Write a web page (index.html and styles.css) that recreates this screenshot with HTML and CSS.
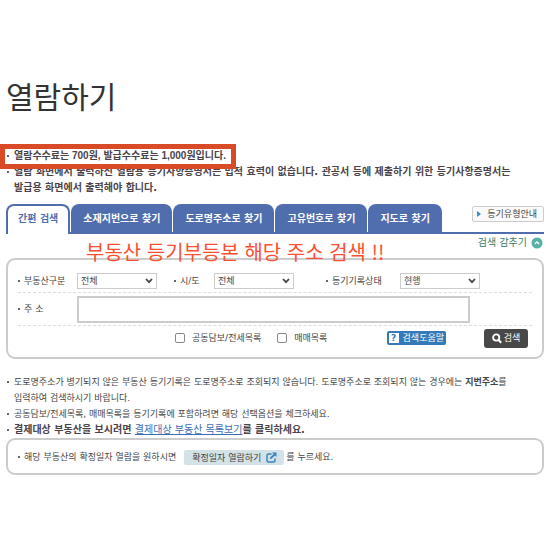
FILE: index.html
```html
<!DOCTYPE html>
<html lang="ko">
  <head>
    <meta charset="UTF-8" />
    <meta name="viewport" content="width=device-width, initial-scale=1.0" />
    <title>열람하기</title>
    <link rel="stylesheet" href="styles.css">
  </head>
  <body>
    <div class="container">
      <h1>열람하기</h1>
      <ul class="list notice">
        <li class="fee">열람수수료는 700원, 발급수수료는 1,000원입니다.</li>
        <li>열람 화면에서 출력하신 열람용 등기사항증명서는 법적 효력이 없습니다. 관공서 등에 제출하기 위한 등기사항증명서는<br>발급용 화면에서 출력해야 합니다.</li>
      </ul>

      <div class="tab-header">
        <a class="tab-item active" href="#">간편 검색</a>
        <a class="tab-item" href="#">소재지번으로 찾기</a>
        <a class="tab-item" href="#">도로명주소로 찾기</a>
        <a class="tab-item" href="#">고유번호로 찾기</a>
        <a class="tab-item" href="#">지도로 찾기</a>
        <button class="guide" type="button">
          <svg width="4" height="6" viewBox="0 0 4 6"><path d="M0 0L4 3L0 6Z" fill="#2f8fc4"/></svg>
          등기유형안내
        </button>
      </div>

      <div class="toolbar">
        <p class="callout">부동산 등기부등본 해당 주소 검색 !!</p>
        <button class="toggle" type="button">
          검색 감추기
          <svg width="12" height="12" viewBox="0 0 12 12"><circle cx="6" cy="6" r="5.5" fill="#55b3a3"/><path d="M3.8 7L6 4.8L8.2 7" fill="none" stroke="#fff" stroke-width="1.3"/></svg>
        </button>
      </div>

      <form class="panel search">
        <div class="row">
          <label class="name" for="kind">부동산구분</label>
          <div class="select">
            <select id="kind"><option>전체</option></select>
            <svg width="8" height="6" viewBox="0 0 8 6"><path d="M1 1L4 4.2L7 1" fill="none" stroke="#444" stroke-width="1.8"/></svg>
          </div>
          <label class="name" for="city">시/도</label>
          <div class="select">
            <select id="city"><option>전체</option></select>
            <svg width="8" height="6" viewBox="0 0 8 6"><path d="M1 1L4 4.2L7 1" fill="none" stroke="#444" stroke-width="1.8"/></svg>
          </div>
          <label class="name" for="state">등기기록상태</label>
          <div class="select">
            <select id="state"><option>현행</option></select>
            <svg width="8" height="6" viewBox="0 0 8 6"><path d="M1 1L4 4.2L7 1" fill="none" stroke="#444" stroke-width="1.8"/></svg>
          </div>
        </div>
        <div class="row address">
          <label class="name" for="address">주 소</label>
          <input id="address" type="text">
        </div>
        <div class="row options">
          <div class="checks">
            <label><input type="checkbox"> 공동담보/전세목록</label>
            <label><input type="checkbox"> 매매목록</label>
          </div>
          <button class="help" type="button"><span class="mark">?</span>검색도움말</button>
          <button class="submit" type="submit">
            <svg width="10" height="11" viewBox="0 0 10 11"><circle cx="4.2" cy="4.5" r="3.1" fill="none" stroke="#fff" stroke-width="1.8"/><path d="M6.3 6.8L9.2 9.8" stroke="#fff" stroke-width="2"/></svg>
            검색
          </button>
        </div>
      </form>

      <ul class="list help-list">
        <li>도로명주소가 병기되지 않은 부동산 등기기록은 도로명주소로 조회되지 않습니다. 도로명주소로 조회되지 않는 경우에는 <b>지번주소</b>를<br>입력하여 검색하시기 바랍니다.</li>
        <li>공동담보/전세목록, 매매목록을 등기기록에 포함하려면 해당 선택옵션을 체크하세요.</li>
        <li class="pay"><strong>결제대상 부동산을 보시려면 </strong><a href="#">결제대상 부동산 목록보기</a><strong>를 클릭하세요.</strong></li>
      </ul>

      <div class="panel date">
        <span class="name">해당 부동산의 확정일자 열람을 원하시면</span>
        <button class="open" type="button">
          확정일자 열람하기
          <svg width="11" height="11" viewBox="0 0 11 11"><path d="M5.5 2H2.5Q1 2 1 3.5V8.5Q1 10 2.5 10H7.5Q9 10 9 8.5V6.5" fill="none" stroke="#3b83bd" stroke-width="1.5"/><path d="M4.3 6.7L8.5 2.5" stroke="#3b83bd" stroke-width="1.8"/><path d="M6 0.5H10.5V5Z" fill="#3b83bd"/></svg>
        </button>
        <span>를 누르세요.</span>
      </div>
    </div>
  </body>
</html>
```

FILE: styles.css
```css
* {
  box-sizing: border-box;
}

body {
  margin: 0;
  background: #fff;
  color: #444;
  font-family: "DejaVu Sans", "Noto Sans CJK KR", sans-serif;
  font-size: 9px;
  line-height: 16px;
}

.container {
  padding: 76px 6px 0;
}

h1 {
  margin: 0 0 28px;
  color: #333;
  font-size: 30px;
  font-weight: 400;
  line-height: 44px;
}

button,
input,
select {
  margin: 0;
  font: inherit;
}

button {
  display: flex;
  align-items: center;
  padding: 0;
  border: 0;
  background: none;
  white-space: nowrap;
}

svg {
  flex: none;
}

.list {
  margin: 0;
  padding: 0;
  list-style: none;
}

.list li {
  position: relative;
  padding-left: 8px;
  white-space: nowrap;
}

.list li::before {
  content: "";
  position: absolute;
  top: 7px;
  left: 1px;
  width: 2px;
  height: 2px;
  background: #666;
}

.notice {
  color: #4a4248;
  font-size: 10px;
  font-weight: 700;
}

.notice .fee {
  width: fit-content;
  font-family: "Liberation Sans", "Noto Sans CJK KR", sans-serif;
}

/* 수수료 강조 테두리 */
.notice .fee::after {
  content: "";
  position: absolute;
  z-index: 1;
  inset: -4px -10px -5px -6px;
  border: 5px solid #d94a27;
}

.tab-header {
  display: flex;
  gap: 1px;
  height: 30px;
  margin-top: 8px;
  border-bottom: 2px solid #506dae;
}

.tab-item {
  height: 30px;
  padding: 0 12px;
  border-radius: 8px 8px 0 0;
  background: #506dae;
  color: #fff;
  font-size: 10px;
  font-weight: 700;
  line-height: 29px;
  text-decoration: none;
  white-space: nowrap;
}

.tab-item.active {
  padding: 0 10px;
  border: 2px solid #506dae;
  border-bottom: 0;
  background: #fff;
  color: #506dae;
  line-height: 26px;
}

.guide {
  gap: 6px;
  height: 16px;
  margin: 2px 0 0 auto;
  padding: 0 6px 0 4px;
  border: 1px solid #ccc;
  border-radius: 2px;
  background: #fafafa;
  color: #444;
}

.toolbar {
  position: relative;
  display: flex;
  justify-content: flex-end;
  padding-bottom: 6px;
}

.callout {
  position: absolute;
  z-index: 1;
  top: 4px;
  left: 80px;
  margin: 0;
  color: #fb4f2f;
  font-family: "Noto Sans CJK KR", sans-serif;
  font-size: 20px;
  line-height: 28px;
  white-space: nowrap;
}

.toggle {
  gap: 4px;
  height: 18px;
  padding-right: 1px;
  color: #348069;
  font-size: 10px;
}

.panel {
  border: 2px solid #ccc;
  border-radius: 9px;
}

.search {
  padding: 10px;
}

.row {
  display: grid;
  grid-template-columns: 59fr 97fr 40fr 112fr 74fr 132fr;
  align-items: center;
  height: 23px;
  border-bottom: 1px dashed #ddd;
}

.name {
  display: flex;
  align-items: center;
  gap: 4px;
  white-space: nowrap;
}

.name::before {
  content: "";
  width: 2px;
  height: 2px;
  background: #666;
}

.select {
  position: relative;
  width: 80px;
}

.select select {
  display: block;
  width: 100%;
  height: 16px;
  padding: 0 3px;
  border: 1px solid #ccc;
  border-radius: 0;
  background: #fff;
  color: #444;
  line-height: 14px;
  appearance: none;
}

.select svg {
  position: absolute;
  top: 5px;
  right: 4px;
  pointer-events: none;
}

.row.address {
  grid-template-columns: 59fr 393fr 62fr;
  height: 33px;
}

.address input {
  width: 100%;
  height: 27px;
  padding: 0 4px;
  border: 2px solid #ccc;
}

.row.options {
  display: flex;
  height: 24px;
  margin-bottom: -3px;
  padding: 0 4px 0 157px;
  border-bottom: 0;
}

.checks {
  display: flex;
  gap: 16px;
  white-space: nowrap;
}

.checks label {
  display: flex;
  align-items: center;
  gap: 7px;
}

.checks input {
  width: 10px;
  height: 10px;
  border: 1px solid #888;
  border-radius: 2px;
  background: #fff;
  appearance: none;
}

.help {
  gap: 4px;
  height: 14px;
  margin-left: auto;
  padding: 0 2px;
  border-radius: 2px;
  background: #327bb8;
  color: #fff;
}

.help .mark {
  width: 10px;
  background: #fff;
  color: #327bb8;
  font-weight: 700;
  line-height: 10px;
}

.submit {
  justify-content: center;
  gap: 2px;
  width: 44px;
  height: 19px;
  margin-left: 38px;
  border-radius: 3px;
  background: #484848;
  color: #fff;
}

.help-list {
  margin-top: 15px;
}

.help-list .pay {
  font-size: 10px;
}

.help-list strong {
  color: #4a4248;
}

.help-list a {
  color: #3c6cb4;
}

.date {
  display: flex;
  align-items: center;
  height: 37px;
  padding: 0 10px;
  white-space: nowrap;
}

.open {
  gap: 5px;
  height: 15px;
  margin: 2px 2px 0 8px;
  padding: 0 7px 0 8px;
  border-radius: 2px;
  background: #d3e2e7;
  color: #444;
}
```
